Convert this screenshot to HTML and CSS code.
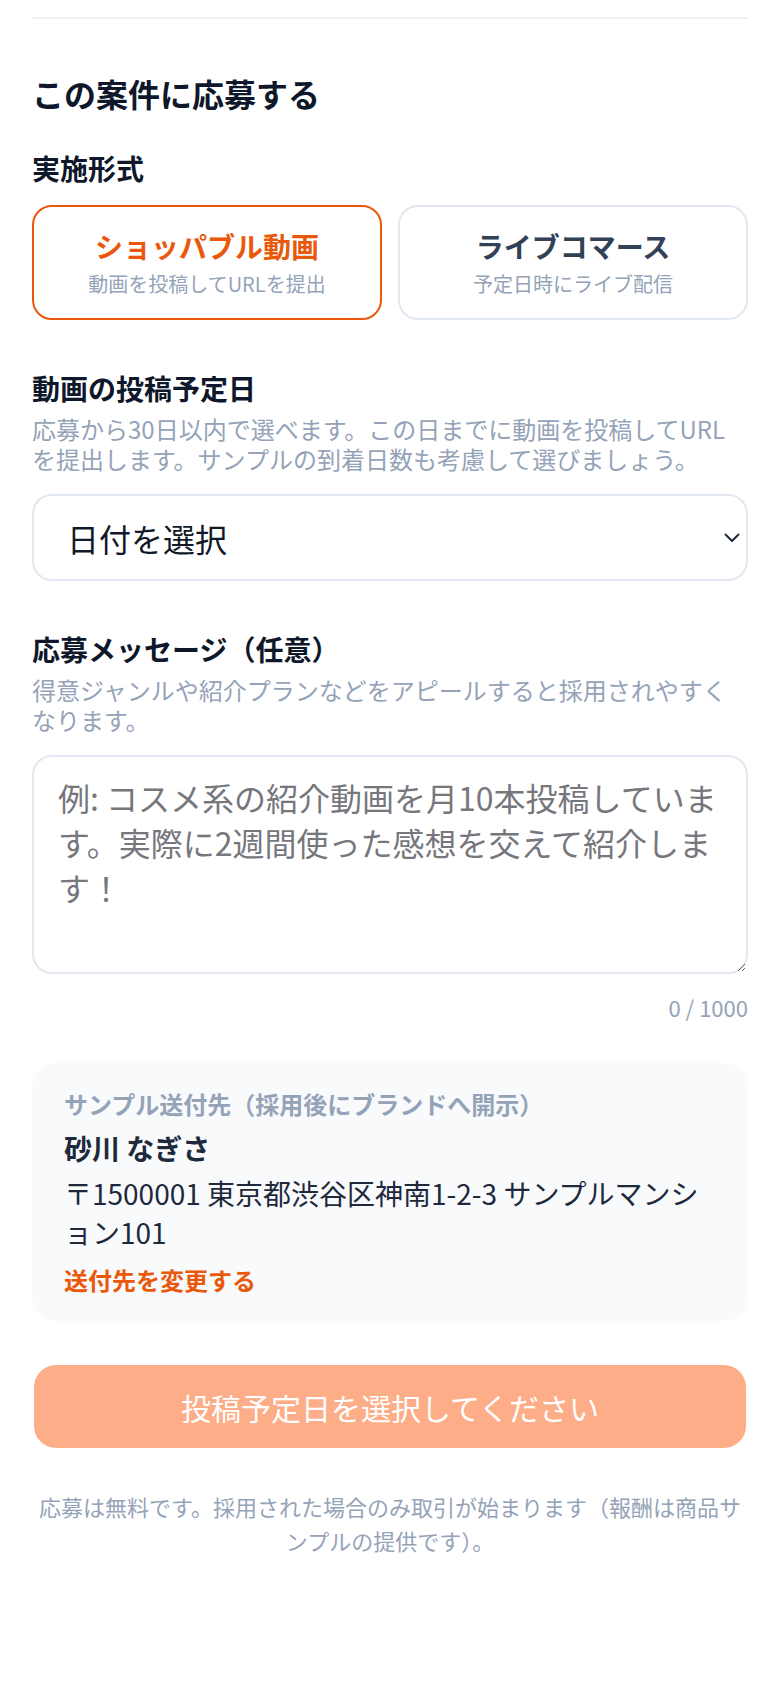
FILE: index.html
```html
<!DOCTYPE html>
<html lang="ja">
<head>
  <meta charset="utf-8">
  <title>この案件に応募する</title>
  <link rel="stylesheet" href="styles.css">
</head>
<body>
<div class="page">
  <div class="divider"></div>

  <h2 class="title">この案件に応募する</h2>

  <div class="label first">実施形式</div>
  <div class="types">
    <div class="type selected">
      <div class="type-name">ショッパブル動画</div>
      <div class="type-sub">動画を投稿してURLを提出</div>
    </div>
    <div class="type">
      <div class="type-name">ライブコマース</div>
      <div class="type-sub">予定日時にライブ配信</div>
    </div>
  </div>

  <div class="label">動画の投稿予定日</div>
  <p class="hint">応募から30日以内で選べます。この日までに動画を投稿してURLを提出します。サンプルの到着日数も考慮して選びましょう。</p>
  <div class="select">
    <span>日付を選択</span>
    <svg class="chevron" width="16" height="10" viewBox="0 0 16 10"><path d="M1.5 1.5 L8 8 L14.5 1.5" fill="none" stroke="#1f2937" stroke-width="2" stroke-linecap="round" stroke-linejoin="round"/></svg>
  </div>

  <div class="label">応募メッセージ（任意）</div>
  <p class="hint">得意ジャンルや紹介プランなどをアピールすると採用されやすくなります。</p>
  <textarea class="message" placeholder="例: コスメ系の紹介動画を月10本投稿しています。実際に2週間使った感想を交えて紹介します！"></textarea>
  <div class="counter">0 / 1000</div>

  <div class="address">
    <div class="address-head">サンプル送付先（採用後にブランドへ開示）</div>
    <div class="address-name">砂川 なぎさ</div>
    <div class="address-line">〒1500001 東京都渋谷区神南1-2-3 サンプルマンション101</div>
    <a class="address-edit" href="#">送付先を変更する</a>
  </div>

  <button class="submit" disabled>投稿予定日を選択してください</button>

  <p class="note">応募は無料です。採用された場合のみ取引が始まります（報酬は商品サンプルの提供です）。</p>
</div>
</body>
</html>
```

FILE: styles.css
```css
body {
  margin: 0;
  background: #fff;
  font-family: "Noto Sans CJK JP", "Noto Sans", sans-serif;
  color: #0f172a;
}

.page { padding: 17px 32px 60px; }

.divider { border-top: 2px solid #eef1f5; }

.title {
  margin: 52px 0 0;
  font-size: 32px;
  line-height: 45px;
  font-weight: 700;
}

.label {
  margin-top: 48px;
  font-size: 28px;
  line-height: 40px;
  font-weight: 700;
}
.label.first { margin-top: 32px; }

.hint {
  margin: 6px 0 0;
  padding-right: 6px;
  font-size: 24px;
  line-height: 30px;
  color: #94a3b8;
}

.types {
  display: grid;
  grid-template-columns: 1fr 1fr;
  gap: 16px;
  margin-top: 17px;
}

.type {
  display: flex;
  flex-direction: column;
  align-items: center;
  gap: 4px;
  padding: 19px 12px 20px;
  border: 2px solid #e2e8f0;
  border-radius: 20px;
}
.type-name {
  font-size: 28px;
  line-height: 40px;
  font-weight: 700;
  color: #334155;
}
.type-sub {
  font-size: 20px;
  line-height: 28px;
  color: #94a3b8;
}
.type.selected { border-color: #ea580c; }
.type.selected .type-name { color: #ea580c; }

.select {
  display: flex;
  align-items: center;
  justify-content: space-between;
  height: 87px;
  box-sizing: border-box;
  margin-top: 20px;
  padding: 0 6px 0 33px;
  border: 2px solid #e2e8f0;
  border-radius: 20px;
  font-size: 32px;
  color: #111827;
}

.message {
  display: block;
  width: 100%;
  height: 219px;
  box-sizing: border-box;
  margin-top: 20px;
  padding: 18px 24px;
  border: 2px solid #e2e8f0;
  border-radius: 20px;
  font-family: inherit;
  font-size: 32px;
  line-height: 45px;
  color: #111827;
  outline: none;
}
.message::placeholder { color: #76777d; }

.counter {
  margin-top: 16px;
  text-align: right;
  font-size: 22px;
  line-height: 34px;
  color: #94a3b8;
}

.address {
  margin-top: 39px;
  padding: 25px 32px 25px;
  background: #f8fafc;
  border-radius: 24px;
}
.address-head {
  font-size: 24px;
  line-height: 32px;
  font-weight: 700;
  color: #94a3b8;
}
.address-name {
  margin-top: 8px;
  font-size: 28px;
  line-height: 40px;
  font-weight: 700;
  color: #1e293b;
}
.address-line {
  margin-top: 6px;
  font-size: 28px;
  line-height: 39px;
  color: #1e293b;
}
.address-edit {
  display: block;
  margin-top: 12px;
  font-size: 24px;
  line-height: 32px;
  font-weight: 700;
  color: #ea580c;
  text-decoration: none;
}

.submit {
  display: block;
  width: calc(100% - 4px);
  height: 83px;
  margin: 44px auto 0;
  border: none;
  border-radius: 22px;
  background: #fdad88;
  color: #fff;
  font-family: inherit;
  font-size: 30px;
}

.note {
  margin: 41px 0 0;
  text-align: center;
  font-size: 22px;
  line-height: 34px;
  color: #94a3b8;
}
```
